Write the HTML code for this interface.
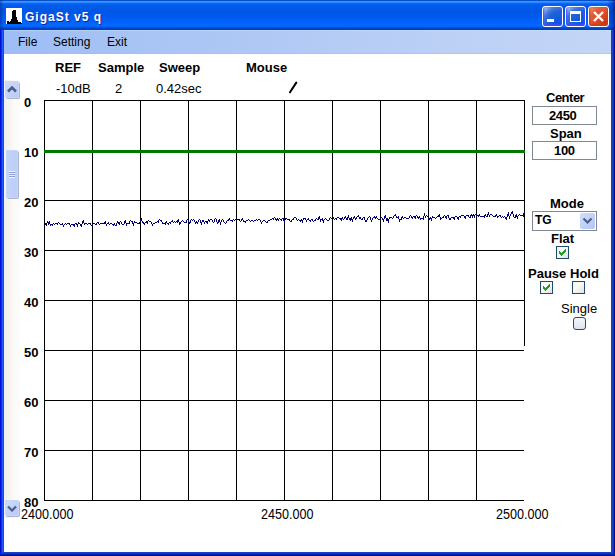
<!DOCTYPE html>
<html><head><meta charset="utf-8">
<style>
* { margin:0; padding:0; box-sizing:border-box; }
html,body { width:615px; height:556px; overflow:hidden; background:#0838d0; }
body { position:relative; font-family:"Liberation Sans", sans-serif; }
.abs { position:absolute; white-space:nowrap; }
#title { left:0; top:0; width:615px; height:30px;
  background: linear-gradient(180deg,#0650cc 0 1px,#3a96ff 1px 2px,#2a84ff 2px 3px,#0c68f4 3px 4px,#0260ee 4px 5px,#005ae8 6px,#0056e6 12px,#005cf4 19px,#0066ff 24px,#0868ff 26px,#005aec 27px,#0048d0 28px,#0040c0 29px,#003cb8 30px); }
#frame { left:0; top:30px; width:615px; height:526px; background:#0a38d0; }
#client { left:4px; top:30px; width:607px; height:522px; background:#fff; }
#menubar { left:4px; top:30px; width:607px; height:24px; background:linear-gradient(90deg,#9ebdf6 0,#a8c4f4 22%,#b2caf4 49%,#bcd0f6 73%,#c4d6f6 100%); box-shadow: inset 0 1px rgba(200,230,255,0.5), inset 0 -1px rgba(170,180,250,0.5); }
.menu { font-size:12px; color:#000; top:35px; }
.tb { left:25px; top:10px; font-size:12px; font-weight:bold; color:#fff; letter-spacing:1px; text-shadow:1px 1px #0a2aa0; }
.btn { width:21px; height:21px; top:6px; border:1px solid #fff; border-radius:3px; }
.bblue { background: radial-gradient(circle at 90% 90%, #0054e9 0%, #2263d5 55%, #4479e4 70%, #a3bbec 90%, #fff 100%); box-shadow: inset 0 -1px 2px 1px #4646ff; }
.bred { background: radial-gradient(circle at 90% 90%, #c83414 0%, #e2522e 55%, #e0603c 70%, #f08868 90%, #f8c0b0 100%); box-shadow: inset 0 -1px 2px 1px #d03c18; }
.lbl { font-size:13px; font-weight:bold; color:#000; }
.val { font-size:13px; color:#000; }
.yl { font-size:13px; font-weight:bold; color:#000; }
.xl { font-size:14px; color:#000; transform:scaleX(0.9); transform-origin:0 0; }
.tbox { left:532px; width:65px; height:19px; border:1px solid #808894; background:#fff; }
.cb { width:13px; height:13px; border:1px solid #1f4c6e; background:linear-gradient(135deg,#f4f4f0,#fafaf8 40%,#e2e2dc); }
.sbtn { left:5px; width:14px; height:17px; border-radius:2px; background:linear-gradient(135deg,#d0dcfc,#b6c8f6); box-shadow: inset 0 0 0 1px #c8d6fa, 1px 1px 0 #aab4cc; }
</style></head><body>
<div class="abs" id="frame"></div>
<div class="abs" style="left:0;top:30px;width:1px;height:526px;background:#0010d0"></div>
<div class="abs" style="left:1px;top:30px;width:1px;height:523px;background:#0a30e8"></div>
<div class="abs" style="left:2px;top:30px;width:1px;height:522px;background:#2258ff"></div>
<div class="abs" style="left:3px;top:30px;width:1px;height:522px;background:#1050c8"></div>
<div class="abs" style="left:611px;top:30px;width:1px;height:522px;background:#1a3cc8"></div>
<div class="abs" style="left:612px;top:30px;width:1px;height:523px;background:#1a40d0"></div>
<div class="abs" style="left:613px;top:30px;width:1px;height:524px;background:#0830b8"></div>
<div class="abs" style="left:614px;top:30px;width:1px;height:526px;background:#00108c"></div>
<div class="abs" style="left:1px;top:552px;width:610px;height:1px;background:#1a40c8"></div>
<div class="abs" style="left:1px;top:553px;width:612px;height:1px;background:#0a38d0"></div>
<div class="abs" style="left:1px;top:554px;width:613px;height:1px;background:#0020b0"></div>
<div class="abs" style="left:0;top:555px;width:615px;height:1px;background:#001088"></div>
<div class="abs" id="title"></div>
<div class="abs" id="client"></div>
<div class="abs" id="menubar"></div>
<div class="abs" style="left:607px;top:0;width:8px;height:30px;background:linear-gradient(90deg,rgba(0,40,160,0),rgba(0,40,160,0.35) 50%,rgba(0,20,120,0.7))"></div>
<div class="abs" style="left:0;top:0;width:4px;height:30px;background:linear-gradient(90deg,rgba(0,40,140,0.5),rgba(0,40,160,0))"></div>
<svg class="abs" style="left:6px;top:8px" width="16" height="16" viewBox="0 0 16 16">
<rect width="16" height="16" fill="#fff"/><g fill="#000"><rect x="7" y="2" width="3" height="1"/><rect x="6" y="3" width="4" height="1"/><rect x="6" y="4" width="4" height="1"/><rect x="6" y="5" width="4" height="1"/><rect x="6" y="6" width="4" height="1"/><rect x="6" y="7" width="4" height="1"/><rect x="6" y="8" width="4" height="1"/><rect x="6" y="9" width="5" height="1"/><rect x="6" y="10" width="5" height="1"/><rect x="5" y="11" width="6" height="1"/><rect x="5" y="12" width="7" height="1"/><rect x="1" y="13" width="2" height="1"/><rect x="4" y="13" width="8" height="1"/><rect x="1" y="14" width="14" height="1"/><rect x="1" y="15" width="15" height="1"/></g>
</svg>
<div class="abs tb">GigaSt v5 q</div>
<div class="abs btn bblue" style="left:542px"><div class="abs" style="left:4px;top:12px;width:7px;height:3px;background:#fff"></div></div>
<div class="abs btn bblue" style="left:565px"><div class="abs" style="left:4px;top:4px;width:11px;height:11px;border:1px solid #fff;border-top-width:3px"></div></div>
<div class="abs btn bred" style="left:588px">
<svg class="abs" style="left:3px;top:3px" width="13" height="13" viewBox="0 0 13 13"><path d="M2,2 L11,11 M11,2 L2,11" stroke="#fff" stroke-width="2.4"/></svg></div>

<div class="abs menu" style="left:18px">File</div>
<div class="abs menu" style="left:53px">Setting</div>
<div class="abs menu" style="left:107px">Exit</div>

<!-- scrollbar -->
<div class="abs" style="left:4px;top:80px;width:16px;height:438px;background:linear-gradient(90deg,#eef6fa 0 1px,#f1efe8 1px,#f5f4ef 35%,#fafaf8 60%,#fdfcfd)"></div>
<div class="abs sbtn" style="top:81px"><svg class="abs" style="left:1.5px;top:5px" width="10" height="7" viewBox="0 0 10 7"><path d="M1,5.5 L5,1.5 L9,5.5" fill="none" stroke="#4a5c80" stroke-width="2.5"/></svg></div>
<div class="abs sbtn" style="top:150px;left:6px;width:12px;height:48px;background:linear-gradient(90deg,#c6d4fa,#bcccf6)"><div class="abs" style="left:3px;top:21px;width:6px;height:7px;background:repeating-linear-gradient(180deg,#eef2fe 0 1px,#8ca0d8 1px 2px)"></div></div>
<div class="abs sbtn" style="top:500px;height:16px"><svg class="abs" style="left:1.5px;top:5px" width="10" height="7" viewBox="0 0 10 7"><path d="M1,1.5 L5,5.5 L9,1.5" fill="none" stroke="#4d6185" stroke-width="2.2"/></svg></div>

<div class="abs lbl" style="left:55px;top:60px">REF</div>
<div class="abs lbl" style="left:98px;top:60px">Sample</div>
<div class="abs lbl" style="left:159px;top:60px">Sweep</div>
<div class="abs lbl" style="left:246px;top:60px">Mouse</div>
<div class="abs val" style="left:56px;top:81px">-10dB</div>
<div class="abs val" style="left:115px;top:81px">2</div>
<div class="abs val" style="left:156px;top:81px">0.42sec</div>
<svg class="abs" style="left:0;top:0" width="615" height="556">
<path d="M290,92.3 L296.3,82.6" stroke="#000" stroke-width="2" fill="none" stroke-linecap="round"/>
<rect x="44" y="100" width="1" height="401" fill="#000"/>
<rect x="92" y="100" width="1" height="401" fill="#000"/>
<rect x="140" y="100" width="1" height="401" fill="#000"/>
<rect x="188" y="100" width="1" height="401" fill="#000"/>
<rect x="236" y="100" width="1" height="401" fill="#000"/>
<rect x="284" y="100" width="1" height="401" fill="#000"/>
<rect x="332" y="100" width="1" height="401" fill="#000"/>
<rect x="380" y="100" width="1" height="401" fill="#000"/>
<rect x="428" y="100" width="1" height="401" fill="#000"/>
<rect x="476" y="100" width="1" height="401" fill="#000"/>
<rect x="524" y="100" width="1" height="246" fill="#000"/>
<rect x="44" y="100" width="481" height="1" fill="#000"/>
<rect x="44" y="150" width="481" height="1" fill="#000"/>
<rect x="44" y="200" width="481" height="1" fill="#000"/>
<rect x="44" y="250" width="481" height="1" fill="#000"/>
<rect x="44" y="300" width="481" height="1" fill="#000"/>
<rect x="44" y="350" width="480" height="1" fill="#000"/>
<rect x="44" y="400" width="480" height="1" fill="#000"/>
<rect x="44" y="450" width="480" height="1" fill="#000"/>
<rect x="44" y="500" width="480" height="1" fill="#000"/>
<rect x="44" y="150" width="481" height="3" fill="#007800"/>
<path d="M44,223h1v1h-1zM45,223h1v2h-1zM46,223h1v3h-1zM47,222h1v1h-1zM47,221h1v2h-1zM48,223h1v1h-1zM48,222h1v3h-1zM49,221h1v3h-1zM50,224h1v1h-1zM50,225h1v1h-1zM51,224h1v1h-1zM52,224h1v2h-1zM53,223h1v1h-1zM54,224h1v1h-1zM55,223h1v1h-1zM56,223h1v1h-1zM57,223h1v2h-1zM58,222h1v1h-1zM59,223h1v1h-1zM60,224h1v1h-1zM61,224h1v1h-1zM62,223h1v2h-1zM63,225h1v1h-1zM63,225h1v2h-1zM64,224h1v1h-1zM65,223h1v1h-1zM66,224h1v1h-1zM67,223h1v1h-1zM68,223h1v1h-1zM69,223h1v2h-1zM70,225h1v1h-1zM70,225h1v2h-1zM71,224h1v1h-1zM72,224h1v1h-1zM73,224h1v2h-1zM74,224h1v3h-1zM75,223h1v1h-1zM76,223h1v2h-1zM77,225h1v1h-1zM77,224h1v3h-1zM78,223h1v1h-1zM78,222h1v1h-1zM79,223h1v1h-1zM80,224h1v2h-1zM81,224h1v3h-1zM82,223h1v1h-1zM82,221h1v2h-1zM83,220h1v3h-1zM84,223h1v1h-1zM84,224h1v1h-1zM85,223h1v1h-1zM86,223h1v1h-1zM87,224h1v1h-1zM88,223h1v1h-1zM89,223h1v1h-1zM90,223h1v2h-1zM91,225h1v1h-1zM92,224h1v2h-1zM93,223h1v1h-1zM94,223h1v1h-1zM95,224h1v1h-1zM96,223h1v2h-1zM97,222h1v1h-1zM98,222h1v2h-1zM99,224h1v1h-1zM100,223h1v1h-1zM101,223h1v1h-1zM102,223h1v1h-1zM103,223h1v1h-1zM104,222h1v2h-1zM105,221h1v3h-1zM106,224h1v1h-1zM106,224h1v2h-1zM107,223h1v1h-1zM108,222h1v2h-1zM109,224h1v1h-1zM110,223h1v1h-1zM111,223h1v1h-1zM112,224h1v1h-1zM113,224h1v2h-1zM114,223h1v2h-1zM115,225h1v1h-1zM116,223h1v3h-1zM117,222h1v1h-1zM117,221h1v1h-1zM118,222h1v2h-1zM119,222h1v3h-1zM120,221h1v1h-1zM121,222h1v2h-1zM122,224h1v1h-1zM123,224h1v1h-1zM124,221h1v3h-1zM125,220h1v3h-1zM126,223h1v2h-1zM126,224h1v2h-1zM127,223h1v1h-1zM128,223h1v1h-1zM129,221h1v3h-1zM130,220h1v1h-1zM131,221h1v1h-1zM132,221h1v3h-1zM133,224h1v1h-1zM133,223h1v3h-1zM134,222h1v1h-1zM134,221h1v1h-1zM135,222h1v1h-1zM136,222h1v1h-1zM137,223h1v1h-1zM138,223h1v1h-1zM139,222h1v2h-1zM140,219h1v3h-1zM141,218h1v3h-1zM142,221h1v1h-1zM142,222h1v1h-1zM143,222h1v2h-1zM144,223h1v2h-1zM145,222h1v1h-1zM146,221h1v2h-1zM147,221h1v3h-1zM148,220h1v1h-1zM149,221h1v1h-1zM150,221h1v1h-1zM151,222h1v2h-1zM152,224h1v1h-1zM152,224h1v2h-1zM153,223h1v1h-1zM154,223h1v1h-1zM155,222h1v1h-1zM156,222h1v1h-1zM157,221h1v1h-1zM158,220h1v3h-1zM159,219h1v1h-1zM160,220h1v1h-1zM161,220h1v2h-1zM162,222h1v1h-1zM162,223h1v1h-1zM163,223h1v1h-1zM164,223h1v1h-1zM165,222h1v3h-1zM166,221h1v2h-1zM167,223h1v1h-1zM168,223h1v2h-1zM169,222h1v1h-1zM170,222h1v2h-1zM171,221h1v1h-1zM172,220h1v2h-1zM173,222h1v1h-1zM174,221h1v1h-1zM175,222h1v1h-1zM176,221h1v1h-1zM177,220h1v3h-1zM178,219h1v3h-1zM179,222h1v2h-1zM179,224h1v1h-1zM180,222h1v2h-1zM181,221h1v1h-1zM182,220h1v1h-1zM183,221h1v1h-1zM184,222h1v1h-1zM185,222h1v1h-1zM186,220h1v3h-1zM187,219h1v1h-1zM188,220h1v2h-1zM189,222h1v1h-1zM189,223h1v1h-1zM190,220h1v3h-1zM191,219h1v1h-1zM192,220h1v1h-1zM193,219h1v1h-1zM194,220h1v2h-1zM195,222h1v1h-1zM195,222h1v2h-1zM196,221h1v2h-1zM197,222h1v2h-1zM198,220h1v2h-1zM199,219h1v1h-1zM200,220h1v3h-1zM201,223h1v1h-1zM201,222h1v3h-1zM202,221h1v1h-1zM202,220h1v1h-1zM203,220h1v2h-1zM204,222h1v1h-1zM204,222h1v2h-1zM205,221h1v1h-1zM206,221h1v2h-1zM207,221h1v3h-1zM208,220h1v1h-1zM208,219h1v2h-1zM209,220h1v2h-1zM210,219h1v1h-1zM211,219h1v1h-1zM212,220h1v2h-1zM213,222h1v1h-1zM214,219h1v3h-1zM215,218h1v1h-1zM216,219h1v3h-1zM217,222h1v1h-1zM217,223h1v1h-1zM218,220h1v3h-1zM219,219h1v3h-1zM220,222h1v2h-1zM220,222h1v3h-1zM221,221h1v1h-1zM221,220h1v1h-1zM222,219h1v1h-1zM223,220h1v2h-1zM224,222h1v1h-1zM225,223h1v1h-1zM226,221h1v2h-1zM227,220h1v1h-1zM228,219h1v2h-1zM229,218h1v2h-1zM230,220h1v1h-1zM231,220h1v1h-1zM232,220h1v2h-1zM233,219h1v1h-1zM234,220h1v1h-1zM235,219h1v1h-1zM236,219h1v1h-1zM237,219h1v1h-1zM238,219h1v1h-1zM239,219h1v2h-1zM240,221h1v1h-1zM241,219h1v2h-1zM242,218h1v2h-1zM243,220h1v1h-1zM243,221h1v1h-1zM244,221h1v1h-1zM245,221h1v2h-1zM246,220h1v1h-1zM247,220h1v1h-1zM248,219h1v1h-1zM249,220h1v1h-1zM250,221h1v1h-1zM251,220h1v1h-1zM252,220h1v1h-1zM253,221h1v1h-1zM254,220h1v1h-1zM255,220h1v1h-1zM256,219h1v1h-1zM257,220h1v1h-1zM258,219h1v1h-1zM259,219h1v1h-1zM260,220h1v2h-1zM261,222h1v1h-1zM261,222h1v2h-1zM262,221h1v1h-1zM263,220h1v1h-1zM264,220h1v1h-1zM265,221h1v1h-1zM266,222h1v1h-1zM267,221h1v2h-1zM268,220h1v1h-1zM269,220h1v1h-1zM270,219h1v1h-1zM271,219h1v1h-1zM272,218h1v1h-1zM273,218h1v2h-1zM274,217h1v1h-1zM275,218h1v2h-1zM276,219h1v2h-1zM277,218h1v2h-1zM278,219h1v2h-1zM279,218h1v1h-1zM280,219h1v1h-1zM281,219h1v2h-1zM282,218h1v1h-1zM283,218h1v3h-1zM284,221h1v2h-1zM284,220h1v4h-1zM285,219h1v1h-1zM285,218h1v1h-1zM286,218h1v1h-1zM287,219h1v1h-1zM288,219h1v1h-1zM289,219h1v2h-1zM290,221h1v1h-1zM291,220h1v2h-1zM292,219h1v1h-1zM293,218h1v2h-1zM294,217h1v1h-1zM295,217h1v1h-1zM296,218h1v2h-1zM297,220h1v1h-1zM298,219h1v1h-1zM299,220h1v1h-1zM300,220h1v2h-1zM301,219h1v2h-1zM302,221h1v1h-1zM302,220h1v3h-1zM303,219h1v1h-1zM303,218h1v1h-1zM304,218h1v1h-1zM305,218h1v2h-1zM306,220h1v1h-1zM306,220h1v2h-1zM307,219h1v1h-1zM308,218h1v2h-1zM309,220h1v1h-1zM310,220h1v2h-1zM311,219h1v1h-1zM312,219h1v2h-1zM313,221h1v1h-1zM314,220h1v1h-1zM315,219h1v2h-1zM316,218h1v1h-1zM317,219h1v1h-1zM318,217h1v3h-1zM319,216h1v3h-1zM320,219h1v2h-1zM320,220h1v2h-1zM321,219h1v1h-1zM322,218h1v3h-1zM323,221h1v1h-1zM323,220h1v3h-1zM324,219h1v1h-1zM325,218h1v1h-1zM326,219h1v1h-1zM327,220h1v1h-1zM328,220h1v1h-1zM329,218h1v2h-1zM330,217h1v1h-1zM331,218h1v1h-1zM332,217h1v1h-1zM333,217h1v2h-1zM334,219h1v1h-1zM335,218h1v1h-1zM336,218h1v2h-1zM337,217h1v1h-1zM338,217h1v1h-1zM339,218h1v1h-1zM340,218h1v2h-1zM341,218h1v3h-1zM342,217h1v2h-1zM343,219h1v1h-1zM344,217h1v2h-1zM345,216h1v2h-1zM346,218h1v1h-1zM346,219h1v1h-1zM347,217h1v3h-1zM348,216h1v1h-1zM348,215h1v3h-1zM349,218h1v1h-1zM349,219h1v1h-1zM350,218h1v3h-1zM351,217h1v3h-1zM352,220h1v1h-1zM352,219h1v3h-1zM353,217h1v2h-1zM354,216h1v2h-1zM355,218h1v1h-1zM355,219h1v1h-1zM356,217h1v2h-1zM357,216h1v1h-1zM358,215h1v2h-1zM359,217h1v1h-1zM359,218h1v1h-1zM360,217h1v2h-1zM361,219h1v1h-1zM362,218h1v2h-1zM363,217h1v1h-1zM364,217h1v3h-1zM365,220h1v1h-1zM365,221h1v1h-1zM366,220h1v2h-1zM367,218h1v2h-1zM368,217h1v1h-1zM369,216h1v1h-1zM370,217h1v3h-1zM371,220h1v1h-1zM371,220h1v2h-1zM372,218h1v2h-1zM373,217h1v1h-1zM374,216h1v2h-1zM375,217h1v2h-1zM376,216h1v2h-1zM377,218h1v1h-1zM378,219h1v1h-1zM379,219h1v1h-1zM380,218h1v1h-1zM381,217h1v1h-1zM382,218h1v2h-1zM383,220h1v1h-1zM383,219h1v3h-1zM384,216h1v3h-1zM385,215h1v3h-1zM386,218h1v2h-1zM386,219h1v2h-1zM387,218h1v3h-1zM388,221h1v1h-1zM388,219h1v4h-1zM389,218h1v1h-1zM389,217h1v1h-1zM390,217h1v1h-1zM391,217h1v1h-1zM392,218h1v1h-1zM393,216h1v2h-1zM394,215h1v1h-1zM395,214h1v2h-1zM396,216h1v1h-1zM396,217h1v1h-1zM397,217h1v1h-1zM398,216h1v3h-1zM399,219h1v2h-1zM399,220h1v2h-1zM400,219h1v1h-1zM401,217h1v3h-1zM402,216h1v2h-1zM403,218h1v1h-1zM404,217h1v1h-1zM405,217h1v1h-1zM406,218h1v1h-1zM407,218h1v1h-1zM408,218h1v1h-1zM409,216h1v2h-1zM410,215h1v1h-1zM411,216h1v2h-1zM412,217h1v2h-1zM413,216h1v1h-1zM414,216h1v2h-1zM415,216h1v3h-1zM416,215h1v1h-1zM417,216h1v2h-1zM418,217h1v2h-1zM419,216h1v2h-1zM420,218h1v1h-1zM420,219h1v1h-1zM421,218h1v1h-1zM422,218h1v1h-1zM423,216h1v4h-1zM424,214h1v2h-1zM424,213h1v3h-1zM425,216h1v1h-1zM425,216h1v2h-1zM426,215h1v1h-1zM427,216h1v1h-1zM428,217h1v2h-1zM429,218h1v2h-1zM430,217h1v2h-1zM431,219h1v1h-1zM431,218h1v3h-1zM432,217h1v1h-1zM432,216h1v1h-1zM433,217h1v1h-1zM434,217h1v1h-1zM435,218h1v1h-1zM436,217h1v1h-1zM437,216h1v1h-1zM438,215h1v2h-1zM439,214h1v3h-1zM440,217h1v2h-1zM440,219h1v1h-1zM441,218h1v1h-1zM442,217h1v1h-1zM443,216h1v2h-1zM444,215h1v1h-1zM445,216h1v2h-1zM446,216h1v3h-1zM447,215h1v1h-1zM448,215h1v3h-1zM449,218h1v1h-1zM449,219h1v1h-1zM450,218h1v2h-1zM451,217h1v1h-1zM452,217h1v1h-1zM453,217h1v2h-1zM454,217h1v3h-1zM455,216h1v1h-1zM456,216h1v1h-1zM457,217h1v2h-1zM458,217h1v3h-1zM459,216h1v1h-1zM460,216h1v2h-1zM461,215h1v1h-1zM462,215h1v1h-1zM463,215h1v1h-1zM464,216h1v2h-1zM465,216h1v3h-1zM466,215h1v1h-1zM467,215h1v1h-1zM468,215h1v2h-1zM469,217h1v1h-1zM470,215h1v3h-1zM471,214h1v2h-1zM472,216h1v1h-1zM472,215h1v3h-1zM473,214h1v2h-1zM474,216h1v1h-1zM474,215h1v3h-1zM475,214h1v1h-1zM476,214h1v1h-1zM477,215h1v1h-1zM478,215h1v2h-1zM479,214h1v2h-1zM480,216h1v1h-1zM481,216h1v1h-1zM482,216h1v1h-1zM483,216h1v1h-1zM484,215h1v3h-1zM485,214h1v2h-1zM486,216h1v1h-1zM487,214h1v3h-1zM488,213h1v1h-1zM488,212h1v3h-1zM489,215h1v1h-1zM489,215h1v2h-1zM490,214h1v1h-1zM491,214h1v1h-1zM492,215h1v1h-1zM493,216h1v1h-1zM494,216h1v1h-1zM495,215h1v2h-1zM496,214h1v2h-1zM497,216h1v1h-1zM497,217h1v1h-1zM498,216h1v1h-1zM499,215h1v1h-1zM500,215h1v2h-1zM501,217h1v1h-1zM502,216h1v1h-1zM503,217h1v1h-1zM504,216h1v1h-1zM505,217h1v2h-1zM506,217h1v3h-1zM507,214h1v3h-1zM508,213h1v1h-1zM508,212h1v4h-1zM509,216h1v2h-1zM509,216h1v3h-1zM510,215h1v1h-1zM510,214h1v1h-1zM511,212h1v2h-1zM512,211h1v3h-1zM513,214h1v2h-1zM513,216h1v1h-1zM514,217h1v1h-1zM515,215h1v3h-1zM516,214h1v3h-1zM517,217h1v1h-1zM517,216h1v3h-1zM518,215h1v1h-1zM519,214h1v1h-1zM520,215h1v1h-1zM521,215h1v1h-1zM522,215h1v1h-1zM523,213h1v4h-1zM524,212h1v1h-1zM524,211h1v1h-1z" fill="#000070" shape-rendering="crispEdges"/>
</svg>

<div class="abs yl" style="left:24px;top:95px">0</div>
<div class="abs yl" style="left:24px;top:145px">10</div>
<div class="abs yl" style="left:24px;top:195px">20</div>
<div class="abs yl" style="left:24px;top:245px">30</div>
<div class="abs yl" style="left:24px;top:295px">40</div>
<div class="abs yl" style="left:24px;top:345px">50</div>
<div class="abs yl" style="left:24px;top:395px">60</div>
<div class="abs yl" style="left:24px;top:445px">70</div>
<div class="abs yl" style="left:24px;top:495px">80</div>
<div class="abs xl" style="left:21px;top:506px">2400.000</div>
<div class="abs xl" style="left:261px;top:506px">2450.000</div>
<div class="abs xl" style="left:496px;top:506px">2500.000</div>

<div class="abs lbl" style="left:546px;top:90px;letter-spacing:-0.5px">Center</div>
<div class="abs tbox" style="top:106px"></div>
<div class="abs lbl" style="left:549px;top:108px;letter-spacing:-0.4px">2450</div>
<div class="abs lbl" style="left:550px;top:126px">Span</div>
<div class="abs tbox" style="top:141px"></div>
<div class="abs lbl" style="left:554px;top:143px;letter-spacing:-0.3px">100</div>
<div class="abs lbl" style="left:550px;top:196px">Mode</div>
<div class="abs tbox" style="top:211px;height:20px"></div>
<div class="abs lbl" style="left:535px;top:213px;font-size:12px">TG</div>
<div class="abs" style="left:580px;top:213px;width:15px;height:16px;background:linear-gradient(135deg,#d2ddfc,#b4c6f4);border-radius:2px">
<svg class="abs" style="left:2px;top:4px" width="11" height="7" viewBox="0 0 11 7"><path d="M1.5,1.5 L5.5,5.5 L9.5,1.5" fill="none" stroke="#4d6185" stroke-width="2.2"/></svg></div>
<div class="abs lbl" style="left:551px;top:231px">Flat</div>
<div class="abs cb" style="left:556px;top:246px"><svg class="abs" style="left:2px;top:2px" width="7" height="7" viewBox="0 0 7 7" shape-rendering="crispEdges"><g fill="#249a24"><rect x="6" y="0" width="1" height="1"/><rect x="5" y="1" width="1" height="1"/><rect x="6" y="1" width="1" height="1"/><rect x="0" y="2" width="1" height="1"/><rect x="4" y="2" width="1" height="1"/><rect x="5" y="2" width="1" height="1"/><rect x="6" y="2" width="1" height="1"/><rect x="0" y="3" width="1" height="1"/><rect x="1" y="3" width="1" height="1"/><rect x="3" y="3" width="1" height="1"/><rect x="4" y="3" width="1" height="1"/><rect x="5" y="3" width="1" height="1"/><rect x="0" y="4" width="1" height="1"/><rect x="1" y="4" width="1" height="1"/><rect x="2" y="4" width="1" height="1"/><rect x="3" y="4" width="1" height="1"/><rect x="4" y="4" width="1" height="1"/><rect x="1" y="5" width="1" height="1"/><rect x="2" y="5" width="1" height="1"/><rect x="3" y="5" width="1" height="1"/><rect x="2" y="6" width="1" height="1"/></g></svg></div>
<div class="abs lbl" style="left:528px;top:266px">Pause</div>
<div class="abs lbl" style="left:570px;top:266px">Hold</div>
<div class="abs cb" style="left:540px;top:281px"><svg class="abs" style="left:2px;top:2px" width="7" height="7" viewBox="0 0 7 7" shape-rendering="crispEdges"><g fill="#249a24"><rect x="6" y="0" width="1" height="1"/><rect x="5" y="1" width="1" height="1"/><rect x="6" y="1" width="1" height="1"/><rect x="0" y="2" width="1" height="1"/><rect x="4" y="2" width="1" height="1"/><rect x="5" y="2" width="1" height="1"/><rect x="6" y="2" width="1" height="1"/><rect x="0" y="3" width="1" height="1"/><rect x="1" y="3" width="1" height="1"/><rect x="3" y="3" width="1" height="1"/><rect x="4" y="3" width="1" height="1"/><rect x="5" y="3" width="1" height="1"/><rect x="0" y="4" width="1" height="1"/><rect x="1" y="4" width="1" height="1"/><rect x="2" y="4" width="1" height="1"/><rect x="3" y="4" width="1" height="1"/><rect x="4" y="4" width="1" height="1"/><rect x="1" y="5" width="1" height="1"/><rect x="2" y="5" width="1" height="1"/><rect x="3" y="5" width="1" height="1"/><rect x="2" y="6" width="1" height="1"/></g></svg></div>
<div class="abs cb" style="left:572px;top:281px"></div>
<div class="abs val" style="left:561px;top:301px">Single</div>
<div class="abs cb" style="left:573px;top:317px;border-radius:3px;border-color:#2f4a66;background:linear-gradient(180deg,#f4f6fb,#dde3ee)"></div>
</body></html>
